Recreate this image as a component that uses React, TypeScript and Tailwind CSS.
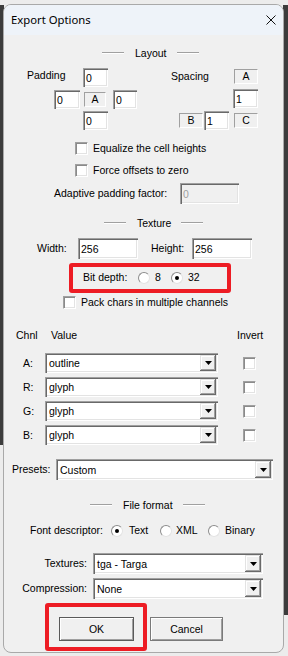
const sunken =
  "shadow-[inset_1px_1px_0_#a0a0a0,inset_2px_2px_0_#696969,inset_-1px_-1px_0_#ffffff,inset_-2px_-2px_0_#e3e3e3]";
const raised =
  "shadow-[inset_-1px_-1px_0_#696969,inset_1px_1px_0_#e3e3e3,inset_-2px_-2px_0_#a0a0a0,inset_2px_2px_0_#ffffff]";

function Edit({ value, className = "", disabled = false }: { value: string; className?: string; disabled?: boolean }) {
  return (
    <div
      className={`${sunken} ${disabled ? "bg-[#f0f0f0] text-[#a0a0a0]" : "bg-white"} flex items-center pl-[3px] pt-[1px] leading-none ${className}`}
    >
      {value}
    </div>
  );
}

function Tag({ text, className = "" }: { text: string; className?: string }) {
  return (
    <div
      className={`flex h-[15px] items-center justify-center border border-t-[#a0a0a0] border-l-[#a0a0a0] border-r-white border-b-white leading-none ${className}`}
    >
      {text}
    </div>
  );
}

function Check({ className = "" }: { className?: string }) {
  return (
    <div
      className={`h-[13px] w-[13px] shrink-0 bg-white border border-t-[#a0a0a0] border-l-[#a0a0a0] border-r-white border-b-white shadow-[inset_1px_1px_0_#8a8a8a,inset_-1px_-1px_0_#e3e3e3] ${className}`}
    />
  );
}

function Radio({ on = false, className = "" }: { on?: boolean; className?: string }) {
  return (
    <div
      className={`flex h-[12px] w-[12px] shrink-0 items-center justify-center rounded-full bg-white border border-t-[#8c8c8c] border-l-[#8c8c8c] border-r-[#e3e3e3] border-b-[#e3e3e3] ${className}`}
    >
      {on && <div className="h-[4px] w-[4px] rounded-full bg-black" />}
    </div>
  );
}

function Combo({ text, className = "" }: { text: string; className?: string }) {
  return (
    <div className={`${sunken} flex items-stretch bg-white ${className}`}>
      <div className="flex flex-1 items-center pl-[4px] pt-[1px] leading-none">{text}</div>
      <div className={`${raised} my-[2px] mr-[2px] flex w-[16px] items-center justify-center bg-[#f0f0f0]`}>
        <svg width="7" height="4" viewBox="0 0 7 4">
          <path d="M0 0 H7 L3.5 4 Z" fill="#000" />
        </svg>
      </div>
    </div>
  );
}

function Header({ label, className = "" }: { label: string; className?: string }) {
  return (
    <div className={`flex h-[14px] items-center ${className}`}>
      <div className="h-[2px] w-[22px] border-t border-t-[#a0a0a0] border-b border-b-white" />
      <span className="ml-[11px] mr-[10px] leading-none">{label}</span>
      <div className="h-[2px] w-[22px] border-t border-t-[#a0a0a0] border-b border-b-white" />
    </div>
  );
}

export default function App() {
  const channels = [
    ["A:", "outline"],
    ["R:", "glyph"],
    ["G:", "glyph"],
    ["B:", "glyph"],
  ];

  return (
    <div className="relative h-[656px] w-[288px] overflow-hidden bg-[#ececec] font-['Liberation_Sans',Arial,sans-serif] text-[10.5px] text-black">
      {/* desktop behind the dialog */}
      <div className="absolute left-0 top-[5px] h-[440px] w-[4px] bg-[#3c3c3c]" />
      <div className="absolute right-0 top-[5px] h-[610px] w-[5px] bg-[#3c3c3c]" />

      <div className="relative ml-[3px] mt-[4px] h-[649px] w-[281px] overflow-hidden rounded-[8px] border border-[#a9a9a9] bg-[#f0f0f0]">
        {/* title bar */}
        <div className="flex h-[30px] items-center justify-between bg-[#eef3f9] pl-[7px] pr-[7px]">
          <span className="font-['Segoe_UI','Noto_Sans',sans-serif] text-[11.3px] leading-none">Export Options</span>
          <svg width="10" height="10" viewBox="0 0 10 10">
            <path d="M0.5 0.5 L9.5 9.5 M9.5 0.5 L0.5 9.5" stroke="#111" strokeWidth="1" />
          </svg>
        </div>

        <div className="flex flex-col">
          <Header label="Layout" className="mt-[11px] pl-[98px]" />

          {/* padding / spacing */}
          <div className="mt-[8px] flex h-[19px]">
            <span className="ml-[23px] w-[40px] self-start leading-[14px]">Padding</span>
            <Edit value="0" className="ml-[16px] w-[25px]" />
            <span className="ml-[63px] mt-[1px] w-[45px] self-start leading-[14px]">Spacing</span>
            <Tag text="A" className="ml-[18px] mt-[1px] w-[24px]" />
          </div>
          <div className="mt-[2px] flex h-[19px]">
            <Edit value="0" className="ml-[50px] mt-[1px] h-[19px] w-[26px]" />
            <Tag text="A" className="ml-[4px] mt-[3px] w-[22px]" />
            <Edit value="0" className="ml-[7px] mt-[1px] h-[19px] w-[24px]" />
            <Edit value="1" className="ml-[96px] w-[25px]" />
          </div>
          <div className="mt-[3px] flex h-[19px]">
            <Edit value="0" className="ml-[79px] w-[25px]" />
            <Tag text="B" className="ml-[71px] mt-[2px] w-[24px]" />
            <Edit value="1" className="ml-[1px] w-[25px]" />
            <Tag text="C" className="ml-[5px] mt-[2px] w-[24px]" />
          </div>

          <div className="mt-[12px] flex h-[13px] items-center">
            <Check className="ml-[71px]" />
            <span className="ml-[5px] leading-none whitespace-nowrap">Equalize the cell heights</span>
          </div>
          <div className="mt-[9px] flex h-[13px] items-center">
            <Check className="ml-[71px]" />
            <span className="ml-[5px] leading-none whitespace-nowrap">Force offsets to zero</span>
          </div>
          <div className="mt-[6px] flex h-[21px] items-center">
            <span className="ml-[50px] w-[120px] leading-none whitespace-nowrap">Adaptive padding factor:</span>
            <Edit value="0" disabled className="ml-[6px] h-[21px] w-[59px]" />
          </div>

          <Header label="Texture" className="mt-[12px] pl-[100px]" />

          <div className="mt-[8px] flex h-[21px] items-center">
            <span className="ml-[33px] w-[34px] leading-none">Width:</span>
            <Edit value="256" className="ml-[7px] h-[21px] w-[60px]" />
            <span className="ml-[13px] w-[38px] leading-none">Height:</span>
            <Edit value="256" className="ml-[3px] h-[21px] w-[60px]" />
          </div>

          <div className="mt-[12px] flex h-[13px] items-center">
            <span className="ml-[79px] w-[47px] leading-none whitespace-nowrap">Bit depth:</span>
            <Radio className="ml-[8px]" />
            <span className="ml-[5px] w-[7px] leading-none">8</span>
            <Radio on className="ml-[9px]" />
            <span className="ml-[5px] leading-none">32</span>
          </div>

          <div className="mt-[12px] flex h-[13px] items-center">
            <Check className="ml-[59px]" />
            <span className="ml-[5px] leading-none whitespace-nowrap">Pack chars in multiple channels</span>
          </div>

          <div className="mt-[19px] flex h-[14px] items-center leading-none">
            <span className="ml-[12px] w-[22px]">Chnl</span>
            <span className="ml-[13px] w-[28px]">Value</span>
            <span className="ml-[158px]">Invert</span>
          </div>

          {channels.map(([ch, val], i) => (
            <div key={ch} className={`${i === 0 ? "mt-[11px]" : "mt-[4px]"} flex h-[20px] items-center`}>
              <span className="ml-[19px] w-[12px] leading-none">{ch}</span>
              <Combo text={val} className="ml-[10px] h-[20px] w-[173px]" />
              <Check className="ml-[25px]" />
            </div>
          ))}

          <div className="mt-[14px] flex h-[21px] items-center">
            <span className="ml-[8px] w-[39px] leading-none">Presets:</span>
            <Combo text="Custom" className="ml-[5px] h-[21px] w-[217px]" />
          </div>

          <Header label="File format" className="mt-[18px] pl-[86px]" />

          <div className="mt-[12px] flex h-[13px] items-center">
            <span className="ml-[26px] w-[74px] leading-none whitespace-nowrap">Font descriptor:</span>
            <Radio on className="ml-[7px]" />
            <span className="ml-[6px] w-[22px] leading-none">Text</span>
            <Radio className="ml-[9px]" />
            <span className="ml-[4px] w-[24px] leading-none">XML</span>
            <Radio className="ml-[8px]" />
            <span className="ml-[5px] leading-none">Binary</span>
          </div>

          <div className="mt-[16px] flex h-[21px] items-center">
            <span className="w-[83px] text-right leading-none">Textures:</span>
            <Combo text="tga - Targa" className="ml-[6px] h-[21px] w-[170px]" />
          </div>
          <div className="mt-[4px] flex h-[21px] items-center">
            <span className="w-[83px] text-right leading-none">Compression:</span>
            <Combo text="None" className="ml-[6px] h-[21px] w-[170px]" />
          </div>

          <div className="mt-[18px] flex h-[24px]">
            <button className="ml-[55px] flex h-[24px] w-[75px] items-center justify-center border border-[#5a5a5a] bg-[#f0f0f0] leading-none shadow-[inset_1px_1px_0_#ffffff,inset_-1px_-1px_0_#a0a0a0]">
              OK
            </button>
            <button className="ml-[16px] flex h-[24px] w-[73px] items-center justify-center border border-[#7a7a7a] bg-[#f0f0f0] leading-none shadow-[inset_1px_1px_0_#ffffff,inset_-1px_-1px_0_#a0a0a0]">
              Cancel
            </button>
          </div>
        </div>

        {/* red annotation boxes */}
        <div className="pointer-events-none absolute left-[65px] top-[258px] h-[30px] w-[162px] rounded-[3px] border-[4px] border-[#ed1c24]" />
        <div className="pointer-events-none absolute left-[41px] top-[598px] h-[48px] w-[102px] rounded-[3px] border-[4px] border-[#ed1c24]" />
      </div>
    </div>
  );
}
